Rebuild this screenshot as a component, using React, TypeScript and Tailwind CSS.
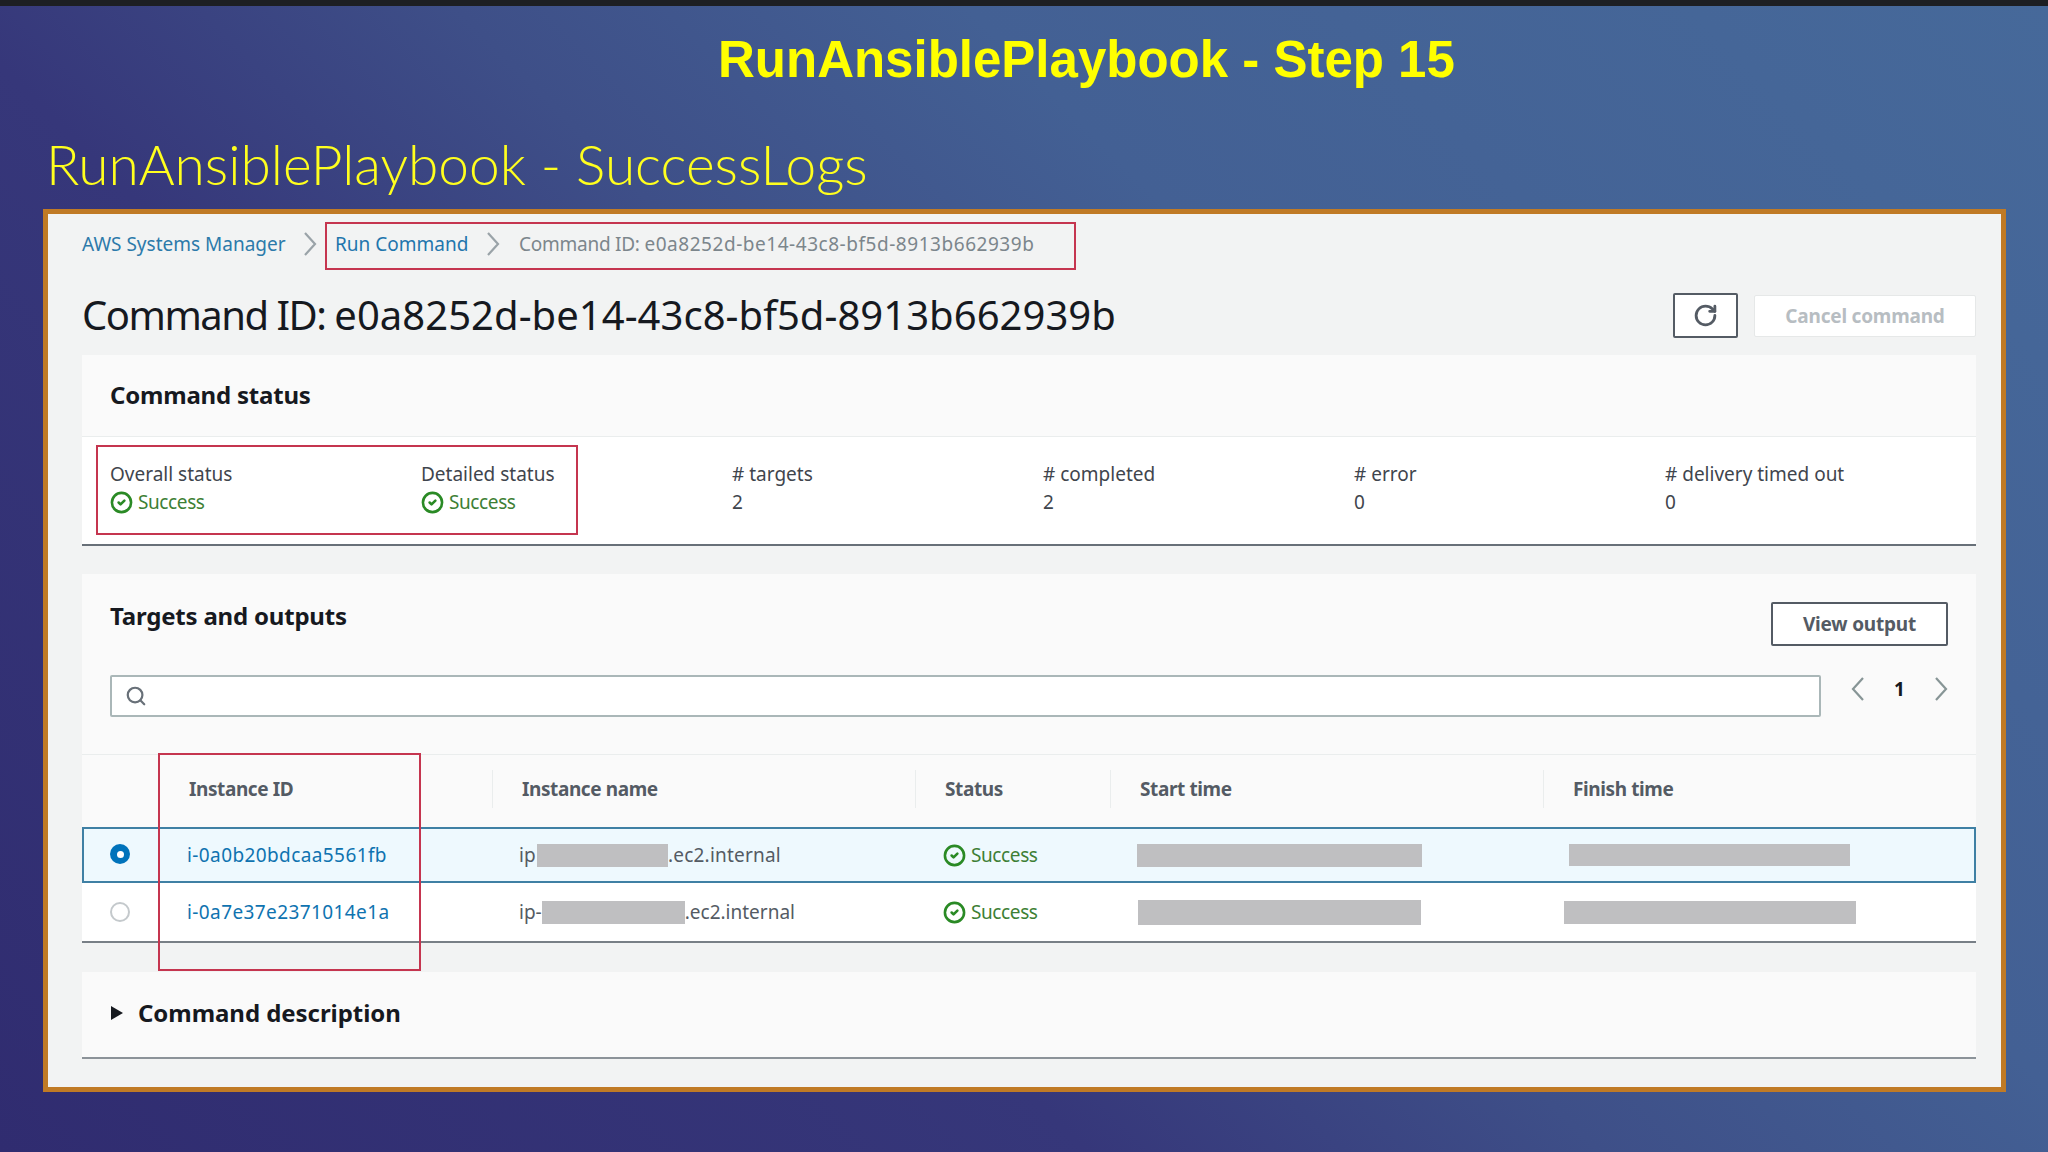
import React from 'react';
import { CircleCheck, RotateCw, Search } from 'lucide-react';

const stats = [
  { label: 'Overall status', value: 'Success', ok: true },
  { label: 'Detailed status', value: 'Success', ok: true },
  { label: '# targets', value: '2' },
  { label: '# completed', value: '2' },
  { label: '# error', value: '0' },
  { label: '# delivery timed out', value: '0' },
];

const columns = ['Instance ID', 'Instance name', 'Status', 'Start time', 'Finish time'];

function Success() {
  return (
    <span className="flex items-center gap-[5px] tracking-[-0.4px] text-[#3d7f35]">
      <CircleCheck className="h-[23px] w-[23px] text-[#2a8a25]" strokeWidth={2.7} />
      Success
    </span>
  );
}

function Chevron({ left = false, className = '' }: { left?: boolean; className?: string }) {
  return (
    <svg viewBox="0 0 14 26" className={`h-[26px] w-[14px] ${className}`} fill="none" stroke="currentColor" strokeWidth="2.2">
      <path d={left ? 'M12 2 L2 13 L12 24' : 'M2 2 L12 13 L2 24'} />
    </svg>
  );
}

function Redacted({ className }: { className: string }) {
  return <div className={`bg-[#bfbfc1] ${className}`} />;
}

export default function App() {
  return (
    <div className="relative flex h-[1152px] w-[2048px] flex-col overflow-hidden bg-[linear-gradient(45deg,#302c70_0%,#36377a_34%,#3e4f88_50%,#436094_66%,#46699a_100%)] font-['Noto_Sans',sans-serif]">
      <div className="h-[6px] bg-[#1d1f23]" />
      <div className="ml-[718px] mt-[24px] h-[60px] font-['Liberation_Sans',sans-serif] text-[51px] font-bold leading-[60px] text-[#ffff00] whitespace-nowrap">
        RunAnsiblePlaybook - Step 15
      </div>
      <div className="ml-[46px] mt-[41px] h-[66px] font-['Lato',sans-serif] text-[55px] font-light leading-[66px] text-[#ffff1e] whitespace-nowrap">
        RunAnsiblePlaybook - SuccessLogs
      </div>

      <div className="relative ml-[43px] mt-[12px] h-[883px] w-[1963px] border-[5px] border-[#c07a25] bg-[#f2f3f3] pl-[34px] pr-[25px] text-[#16191f]">
        {/* red annotation boxes from the slide */}
        <div className="absolute left-[277px] top-[8px] h-[48px] w-[751px] border-2 border-[#c5354f]" />
        <div className="absolute left-[48px] top-[231px] h-[90px] w-[482px] border-2 border-[#c5354f]" />
        <div className="absolute left-[110px] top-[539px] h-[218px] w-[263px] border-2 border-[#c5354f]" />

        <nav className="flex h-[60px] items-center text-[19px]">
          <span className="w-[203px] whitespace-nowrap text-[#2c7aaa]">AWS Systems Manager</span>
          <Chevron className="ml-[18px] text-[#9aa3a8]" />
          <span className="ml-[18px] w-[133px] whitespace-nowrap text-[#1f76ad]">Run Command</span>
          <Chevron className="ml-[18px] text-[#9aa3a8]" />
          <span className="ml-[19px] whitespace-nowrap text-[#7c868c]">
            <span className="tracking-[-0.25px]">Command ID: </span>
            <span className="tracking-[0.54px]">e0a8252d-be14-43c8-bf5d-8913b662939b</span>
          </span>
        </nav>

        <header className="flex h-[81px] items-center">
          <h1 className="text-[40px] font-normal text-[#16191f] whitespace-nowrap">
            <span className="tracking-[-1.5px]">Command ID: </span>
            <span className="tracking-[0.04px]">e0a8252d-be14-43c8-bf5d-8913b662939b</span>
          </h1>
          <button className="ml-auto mt-[2px] flex h-[45px] w-[65px] items-center justify-center rounded-[2px] border-2 border-[#545b64] bg-white text-[#545b64]">
            <RotateCw className="h-[25px] w-[25px]" strokeWidth={2.7} />
          </button>
          <button className="ml-[16px] mt-[2px] h-[42px] w-[222px] rounded-[2px] border border-[#e6e8e8] bg-white pt-[2px] text-[19px] font-bold tracking-[-0.2px] text-[#b7bdc2]">
            Cancel command
          </button>
        </header>

        <section className="border-b-2 border-[#687078]">
          <div className="flex h-[82px] items-center border-b border-[#eaeded] bg-[#fafafa] pb-[2px] pl-[28px] text-[24px] font-bold tracking-[-0.2px]">
            Command status
          </div>
          <div className="grid h-[107px] grid-cols-[311px_311px_311px_311px_311px_311px] bg-white pl-[28px] pt-[23px] text-[19px] leading-[28px]">
            {stats.map((s) => (
              <div key={s.label}>
                <div className="text-[#3f454d]">{s.label}</div>
                {s.ok ? <Success /> : <div className="text-[#3f454d]">{s.value}</div>}
              </div>
            ))}
          </div>
        </section>

        <section className="mt-[28px] border-b-2 border-[#787f86] bg-[#fafafa]">
          <div className="flex items-start pl-[28px] pr-[28px] pt-[28px]">
            <h2 className="-mt-[1px] text-[24px] font-bold leading-[30px] tracking-[-0.2px]">Targets and outputs</h2>
            <button className="ml-auto h-[44px] w-[177px] rounded-[2px] border-2 border-[#545b64] bg-white text-[19px] font-bold tracking-[-0.2px] text-[#545b64]">
              View output
            </button>
          </div>
          <div className="mt-[29px] flex items-start pl-[28px] pr-[28px]">
            <div className="flex h-[42px] w-[1711px] items-center rounded-[2px] border-2 border-[#aab7b8] bg-white pl-[13px]">
              <Search className="h-[22px] w-[22px] text-[#687078]" strokeWidth={2.4} />
            </div>
            <div className="ml-[30px] flex h-[28px] items-center text-[#545b64]">
              <Chevron left className="text-[#879596]" />
              <span className="mx-[29px] text-[19px] font-bold text-[#16191f]">1</span>
              <Chevron className="text-[#879596]" />
            </div>
          </div>

          <div className="mt-[37px] grid h-[73px] grid-cols-[78px_332px_423px_195px_433px_433px] items-center border-t border-[#eaeded] pb-[4px] text-[19px] font-bold tracking-[-0.4px] text-[#545b64]">
            <div />
            {columns.map((c, i) => (
              <div key={c} className={`flex h-[38px] items-center pl-[29px] ${i === 0 ? '' : 'border-l border-[#eaeded]'}`}>
                {c}
              </div>
            ))}
          </div>

          <div className="grid h-[56px] grid-cols-[78px_332px_423px_195px_433px_433px] items-center border-2 border-[#3f80a4] bg-[#eef9fe] text-[19px]">
            <div className="-mt-[2px] ml-[26px] flex h-[20px] w-[20px] items-center justify-center rounded-full bg-[#0073bb]">
              <div className="h-[7px] w-[7px] rounded-full bg-white" />
            </div>
            <div className="pl-[25px] tracking-[0.4px] text-[#0f73b0]">i-0a0b20bdcaa5561fb</div>
            <div className="flex items-center pl-[25px] tracking-[0.2px] text-[#545b64]">
              ip<Redacted className="ml-[1px] h-[23px] w-[131px]" />.ec2.internal
            </div>
            <div className="pl-[26px]"><Success /></div>
            <Redacted className="ml-[25px] h-[23px] w-[285px]" />
            <Redacted className="ml-[24px] h-[22px] w-[281px]" />
          </div>

          <div className="grid h-[58px] grid-cols-[78px_332px_423px_195px_433px_433px] items-center bg-white text-[19px]">
            <div className="ml-[28px] h-[20px] w-[20px] rounded-full border-2 border-[#c4c9cc] bg-white" />
            <div className="pl-[27px] tracking-[0.4px] text-[#0f73b0]">i-0a7e37e2371014e1a</div>
            <div className="flex items-center pl-[27px] text-[#545b64]">
              ip-<Redacted className="h-[23px] w-[143px]" />.ec2.internal
            </div>
            <div className="pl-[28px]"><Success /></div>
            <Redacted className="ml-[28px] h-[25px] w-[283px]" />
            <Redacted className="ml-[21px] h-[23px] w-[292px]" />
          </div>
        </section>

        <section className="mt-[29px] flex h-[87px] items-center border-b-2 border-[#8c9399] bg-[#fafafa] pb-[3px] pl-[29px]">
          <svg viewBox="0 0 12 14" className="h-[14px] w-[12px]">
            <path d="M0 0 L12 7 L0 14 Z" fill="#16191f" />
          </svg>
          <span className="ml-[15px] text-[24px] font-bold tracking-[-0.05px]">Command description</span>
        </section>
      </div>
    </div>
  );
}
